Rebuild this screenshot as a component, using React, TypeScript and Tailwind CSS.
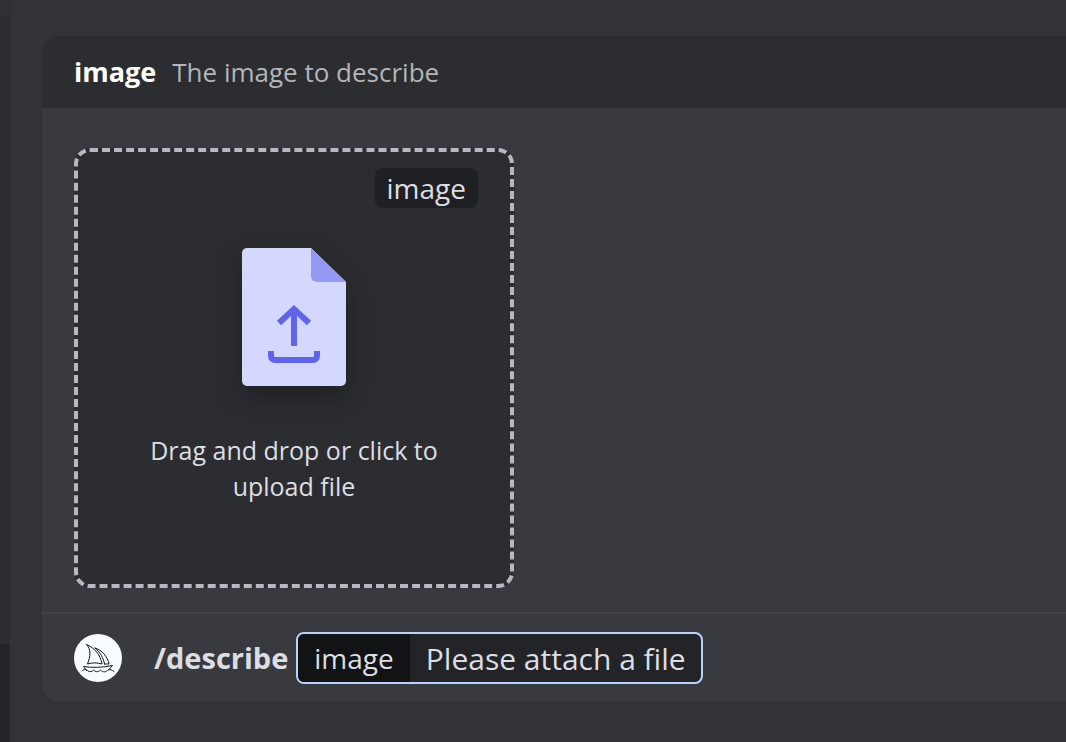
import { useRef } from "react";

// File sheet with folded corner and upload arrow
function UploadFileIcon() {
  return (
    <svg
      width="104"
      height="138"
      viewBox="0 0 104 138"
      fill="none"
      className="drop-shadow-[0_10px_12px_rgba(0,0,0,0.3)]"
      aria-hidden="true"
    >
      <path d="M5 0H69L104 34V133A5 5 0 0 1 99 138H5A5 5 0 0 1 0 133V5A5 5 0 0 1 5 0Z" fill="#d4d7fe" />
      <path d="M69 0L104 34H75A6 6 0 0 1 69 28Z" fill="#9599f3" />
      <path d="M52 98V61M37 75L52 61L67 75" stroke="#6064ea" strokeWidth="6" />
      <path d="M29 103V108A4 4 0 0 0 33 112H71A4 4 0 0 0 75 108V103" stroke="#6064ea" strokeWidth="6" />
    </svg>
  );
}

function SailboatAvatar() {
  return (
    <svg width="48" height="48" viewBox="0 0 48 48" fill="none" className="shrink-0" role="img" aria-label="Bot avatar">
      <circle cx="24" cy="24" r="24" fill="#f8fbff" />
      <g stroke="#14171b" strokeWidth="1" strokeLinecap="round" strokeLinejoin="round">
        <path d="M12.5 10.5C17.5 15.5 16.5 22 13.5 30C18 28.5 23 28.5 28 30C26.5 21 21 14 12.5 10.5Z" />
        <path d="M21 14C26.5 18.5 29.5 24 30.5 30M21 14C28 16 33.5 22.5 35 30L30.500 30" />
        <path d="M12.5 36.5L9.5 32.5C18 34 29 33.5 38.500 31.5L34.500 36" />
        <path d="M8 37C10 34.8 12 35 14 37C16 38.3 18 37.5 19.5 36C21.5 38 24 38.5 26.5 36C29 38.5 32 38.5 34 35.8C36 35 38 36 40 37.5" />
      </g>
    </svg>
  );
}

function DropZone() {
  const fileRef = useRef<HTMLInputElement>(null);

  return (
    <>
      <button
        type="button"
        onClick={() => fileRef.current?.click()}
        className="flex size-[440px] flex-col items-center rounded-2xl border-4 border-dashed border-[#b7b9bf] bg-[#2c2d31] px-8 pt-4 text-[#dcdee2]"
      >
        <span className="flex h-10 items-center self-end rounded-lg bg-[#1f2024] px-3 text-[28px] leading-10">
          image
        </span>
        <span className="mt-10">
          <UploadFileIcon />
        </span>
        <span className="mt-[46px] w-80 text-[25px] leading-9">Drag and drop or click to upload file</span>
      </button>
      <input ref={fileRef} type="file" accept="image/*" aria-label="image" className="hidden" />
    </>
  );
}

function CommandBar() {
  return (
    <div className="flex items-center border-t-2 border-[#43444a] px-8 py-[18px] text-[#dcdee2]">
      <SailboatAvatar />
      <span className="ml-8 text-[29px] leading-10 font-bold">/describe</span>
      <div className="ml-2 flex h-[52px] overflow-hidden rounded-lg border-2 border-[#b9d3fb] bg-[#222427]">
        <label htmlFor="image-option" className="flex items-center bg-[#111315] px-4 text-[28px]">
          image
        </label>
        <input
          id="image-option"
          type="text"
          readOnly
          value="Please attach a file"
          className="w-[291px] bg-transparent px-4 text-[30px] outline-none"
        />
      </div>
    </div>
  );
}

export default function App() {
  return (
    <div className="flex min-h-screen bg-[#323338] font-['Open_Sans','Noto_Sans',sans-serif]">
      {/* Edge of the channel list and the user panel under it */}
      <aside className="flex w-[10px] shrink-0 flex-col bg-[#2c2d31]">
        <div className="h-4 bg-[#303136]" />
        <div className="mt-auto h-[98px] bg-[#242529]" />
      </aside>

      <main className="min-w-0 flex-1 pt-9 pb-10 pl-8">
        <section className="overflow-hidden rounded-l-2xl bg-[#393a3f]">
          <header className="flex h-[72px] items-center gap-4 bg-[#2c2d31] px-8">
            <h1 className="text-[27px] leading-9 font-bold text-white">image</h1>
            <p className="text-[26px] leading-9 text-[#b3b5ba]">The image to describe</p>
          </header>
          <div className="px-8 pt-10 pb-6">
            <DropZone />
          </div>
          <CommandBar />
        </section>
      </main>
    </div>
  );
}
